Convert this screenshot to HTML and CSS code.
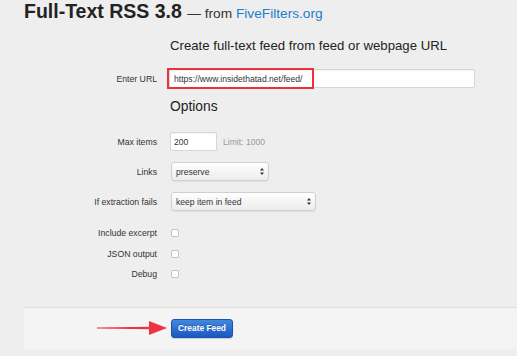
FILE: index.html
```html
<html>
  <head>
    <title>Full-Text RSS 3.8</title>
    <meta name="viewport" content="width=device-width, initial-scale=1.0">
    <link rel="stylesheet" href="styles.css">
  </head>
  <body>
    <div class="page">
      <h1>Full-Text RSS 3.8 <span class="from">&mdash; from <a href="#">FiveFilters.org</a></span></h1>

      <form class="feed-form" onsubmit="return false">
        <h2 class="lead">Create full-text feed from feed or webpage URL</h2>

        <div class="row">
          <label for="url">Enter URL</label>
          <div class="url-wrap">
            <input class="text url" id="url" type="text" value="https://www.insidethatad.net/feed/">
            <span class="mark"></span>
          </div>
        </div>

        <h2 class="options">Options</h2>

        <div class="row">
          <label for="max">Max items</label>
          <input class="text max" id="max" type="text" value="200">
          <span class="hint">Limit: 1000</span>
        </div>

        <div class="row">
          <label for="links">Links</label>
          <div class="select-wrap links">
            <select id="links">
              <option>preserve</option>
              <option>footnotes</option>
              <option>remove</option>
            </select>
            <svg class="caret" width="4" height="7" viewBox="0 0 4 7"><path d="M2 0 L4 2.6 L0 2.6 Z M0 4.4 L4 4.4 L2 7 Z" fill="#333"/></svg>
          </div>
        </div>

        <div class="row">
          <label for="fail">If extraction fails</label>
          <div class="select-wrap fail">
            <select id="fail">
              <option>keep item in feed</option>
              <option>remove item from feed</option>
            </select>
            <svg class="caret" width="4" height="7" viewBox="0 0 4 7"><path d="M2 0 L4 2.6 L0 2.6 Z M0 4.4 L4 4.4 L2 7 Z" fill="#333"/></svg>
          </div>
        </div>

        <div class="row check first">
          <label for="excerpt">Include excerpt</label>
          <input type="checkbox" id="excerpt">
        </div>
        <div class="row check">
          <label for="json">JSON output</label>
          <input type="checkbox" id="json">
        </div>
        <div class="row check">
          <label for="debug">Debug</label>
          <input type="checkbox" id="debug">
        </div>

        <div class="actions">
          <svg class="arrow" width="70" height="16" viewBox="0 0 70 16">
            <path d="M0 7.6 L54 6.8 L54 9.2 L0 8.4 Z" fill="#ee3342"/>
            <path d="M52 1 L70 8 L52 15 Z" fill="#ee3342"/>
          </svg>
          <button class="btn" type="submit">Create Feed</button>
        </div>
      </form>
    </div>
  </body>
</html>
```

FILE: styles.css
```css
body {
  margin: 0;
  background: #eeeeee;
  color: #333;
  font-family: "Liberation Sans", Arial, Helvetica, sans-serif;
}

.page {
  padding-left: 24px;
}

h1 {
  height: 22px;
  margin: 0;
  font-size: 19.5px;
  line-height: 22px;
  font-weight: bold;
  color: #222;
}
h1 .from {
  font-size: 13.7px;
  line-height: 1;
  font-weight: normal;
  color: #333;
}
h1 a {
  color: #1e7dcc;
  text-decoration: none;
}

.lead,
.options {
  margin: 0 0 0 146px;
  font-weight: normal;
  line-height: 16px;
  color: #222;
}
.lead {
  font-size: 13.2px;
  margin-top: 15.6px;
}
.options {
  font-size: 13.8px;
  margin-top: 5.4px;
  margin-bottom: 11.6px;
}

.row {
  display: flex;
  align-items: center;
  height: 30px;
}
.feed-form > .row:first-of-type {
  margin-top: 10.4px;
}
.row label {
  width: 133px;
  margin-right: 13px;
  text-align: right;
  font-size: 8.7px;
  color: #333;
}

.text {
  box-sizing: border-box;
  height: 19px;
  margin: 0;
  border: 1px solid #d6d6d6;
  border-radius: 2px;
  background: #fff;
  box-shadow: inset 0 1px 1px rgba(0, 0, 0, 0.05);
  font-family: inherit;
  font-size: 8.6px;
  color: #333;
  outline: none;
}

.url-wrap {
  position: relative;
  margin-left: -1px;
}
.url {
  width: 306px;
  padding: 0 4px;
}
.mark {
  position: absolute;
  left: -2px;
  top: -1px;
  width: 147px;
  height: 21px;
  box-sizing: border-box;
  border: 2px solid #e8323c;
  pointer-events: none;
}

.max {
  width: 47px;
  padding: 0 3px;
}
.hint {
  margin-left: 6px;
  font-size: 8.6px;
  color: #999;
}

.select-wrap {
  position: relative;
  margin-left: 1px;
}
.select-wrap select {
  appearance: none;
  -webkit-appearance: none;
  box-sizing: border-box;
  height: 19px;
  margin: 0;
  padding: 0 4px;
  border: 1px solid #d0d0d0;
  border-radius: 3px;
  background: linear-gradient(#ffffff, #ececec);
  box-shadow: 0 1px 1px rgba(0, 0, 0, 0.06);
  font-family: inherit;
  font-size: 8.6px;
  color: #333;
  outline: none;
}
.links select {
  width: 98px;
}
.fail select {
  width: 145px;
}
.caret {
  position: absolute;
  right: 5px;
  top: 6px;
}

.check {
  height: 20.5px;
}
.check.first {
  margin-top: 6px;
}
.check input {
  appearance: none;
  -webkit-appearance: none;
  box-sizing: border-box;
  width: 8px;
  height: 8px;
  margin: 0 0 0 1px;
  border: 1px solid #c4c4c4;
  border-radius: 2px;
  background: #fff;
}

.actions {
  display: flex;
  align-items: center;
  height: 41px;
  margin-top: 22.5px;
  padding-left: 73px;
  border-top: 1px solid #dedede;
  background: #f4f4f4;
}
.arrow {
  margin-right: 4px;
}

.btn {
  box-sizing: border-box;
  width: 62px;
  height: 19px;
  padding: 0;
  border: 1px solid #1d52ad;
  border-radius: 3px;
  background: linear-gradient(#3f89de, #1c57c2);
  box-shadow: 0 1px 1px rgba(0, 0, 0, 0.15);
  color: #fff;
  font-family: inherit;
  font-size: 8.4px;
  font-weight: bold;
  text-shadow: 0 -1px 0 rgba(0, 0, 0, 0.2);
  cursor: pointer;
}
```
